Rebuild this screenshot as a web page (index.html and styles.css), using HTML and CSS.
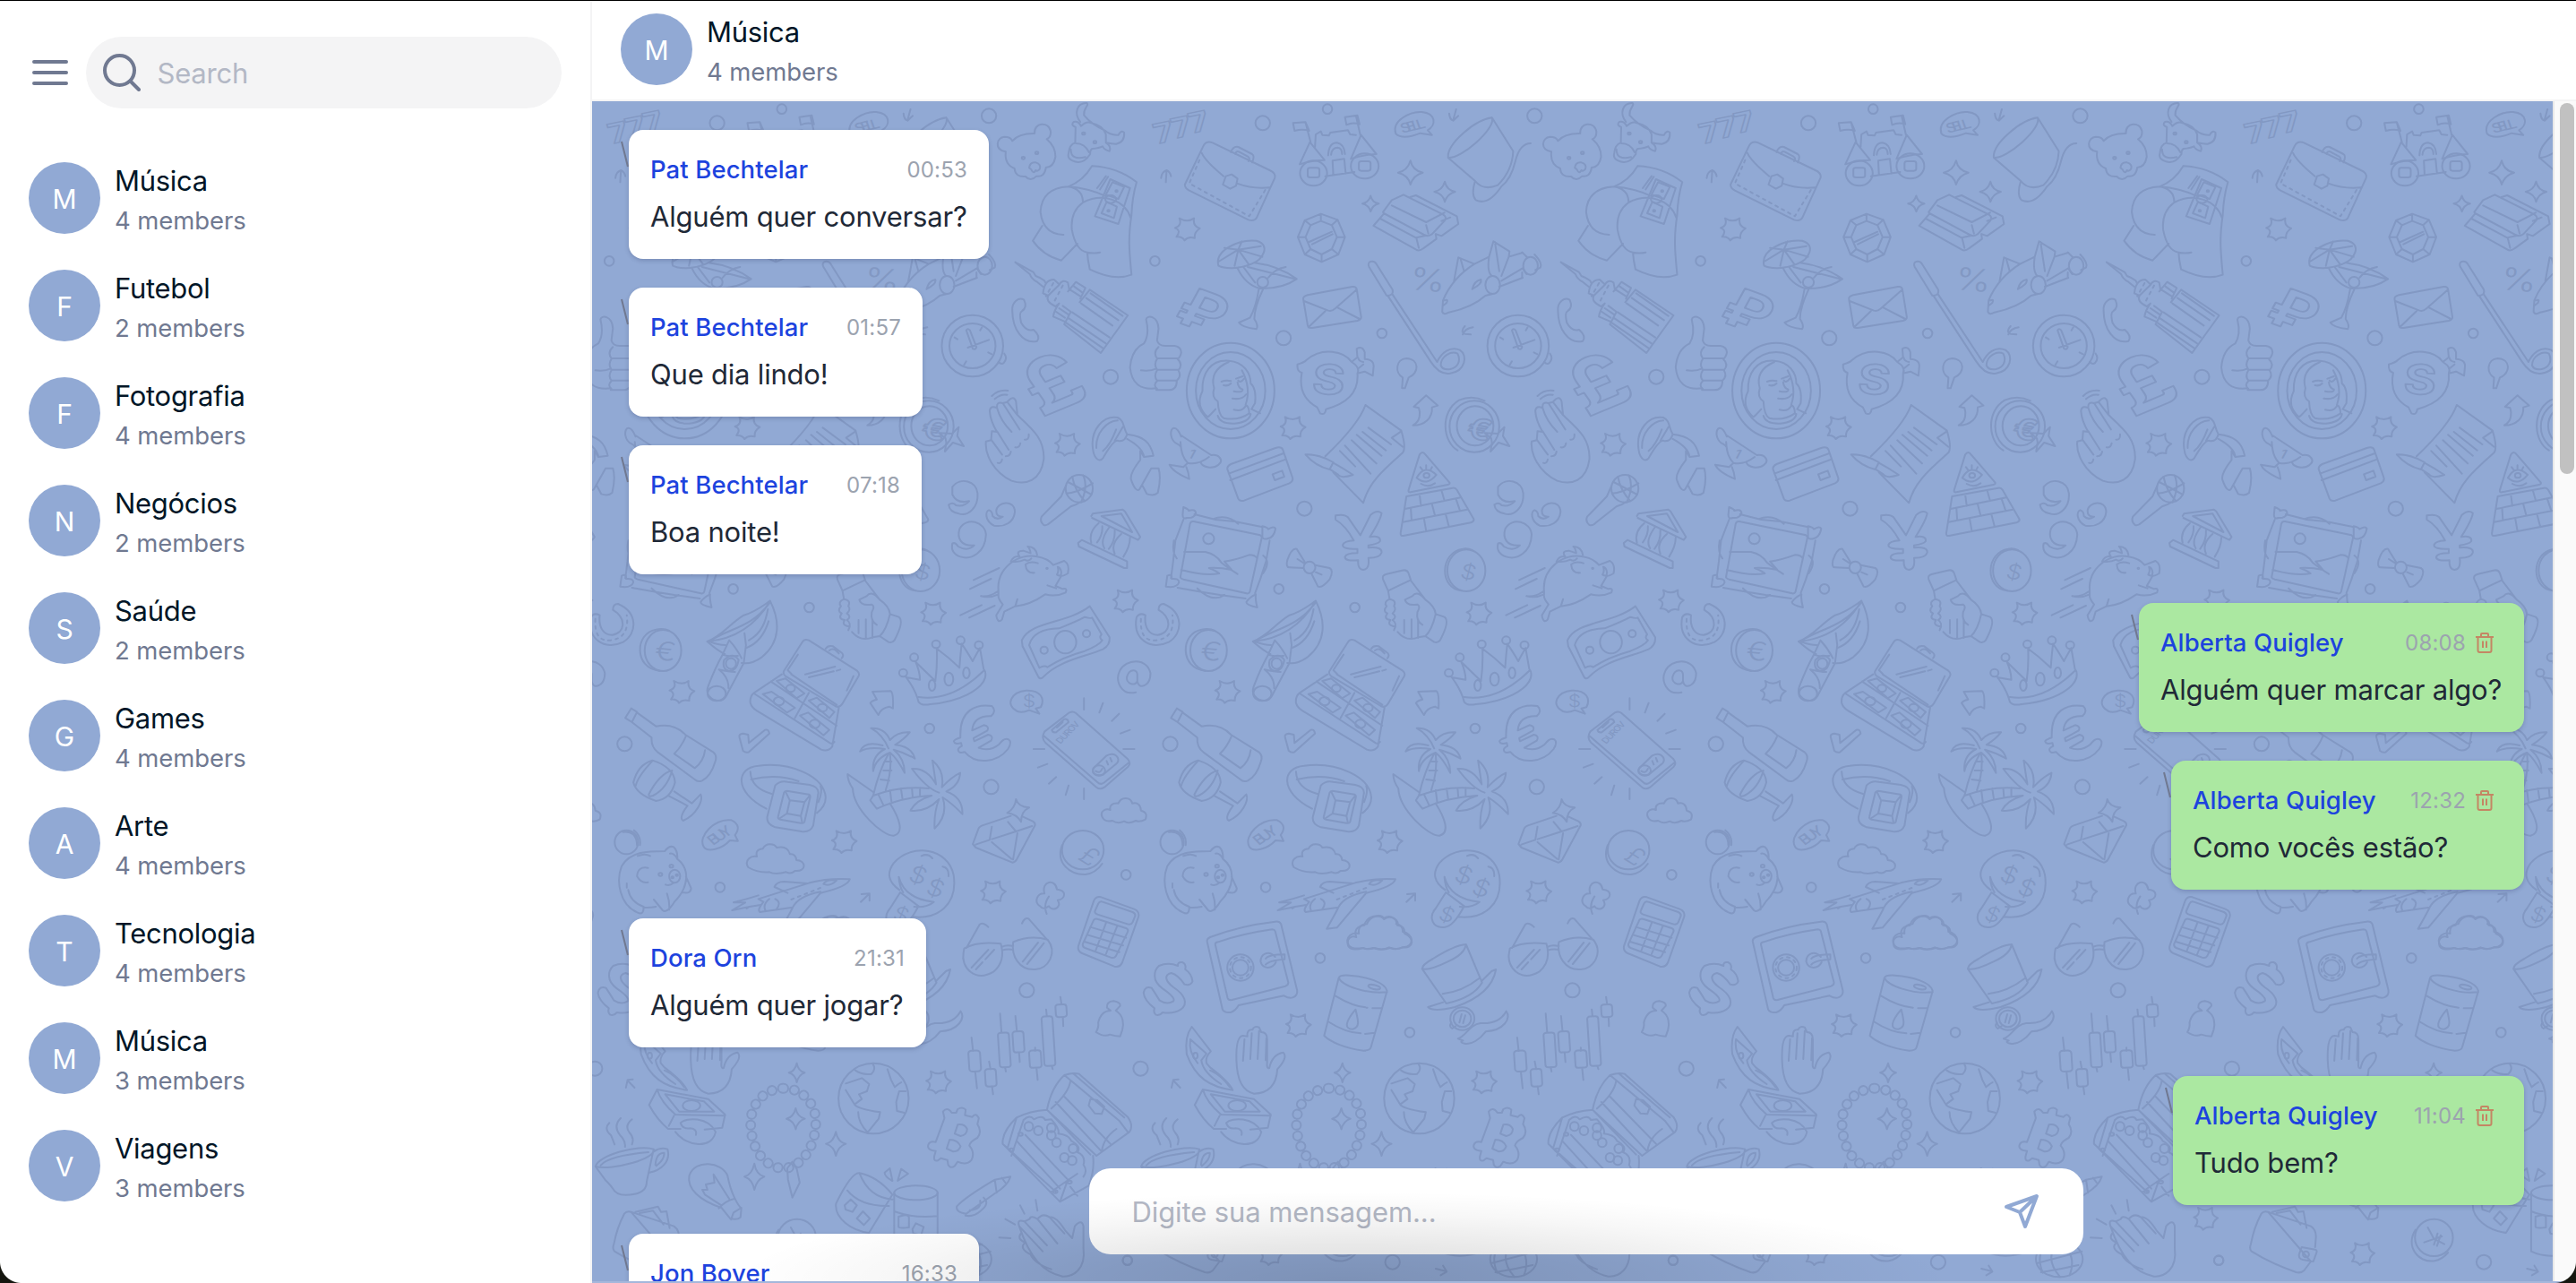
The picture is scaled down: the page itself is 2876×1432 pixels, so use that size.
FILE: index.html
```html
<!DOCTYPE html>
<html lang="pt-BR">
<head>
<meta charset="utf-8">
<title>Chat</title>
<link rel="stylesheet" href="styles.css">
</head>
<body>
<div class="app">
  <aside class="sidebar">
    <div class="topbar">
      <svg class="menu" viewBox="0 0 40 28"><path d="M2 2H38M2 14H38M2 26H38"/></svg>
      <div class="search">
        <svg viewBox="0 0 42 42"><circle cx="18.5" cy="18.5" r="16.5"/><path d="M31 31L40 40"/></svg>
        <span>Search</span>
      </div>
    </div>
    <div class="groups">
      <div class="group"><div class="avatar">M</div><div class="info"><b>Música</b><span>4 members</span></div></div>
      <div class="group"><div class="avatar">F</div><div class="info"><b>Futebol</b><span>2 members</span></div></div>
      <div class="group"><div class="avatar">F</div><div class="info"><b>Fotografia</b><span>4 members</span></div></div>
      <div class="group"><div class="avatar">N</div><div class="info"><b>Negócios</b><span>2 members</span></div></div>
      <div class="group"><div class="avatar">S</div><div class="info"><b>Saúde</b><span>2 members</span></div></div>
      <div class="group"><div class="avatar">G</div><div class="info"><b>Games</b><span>4 members</span></div></div>
      <div class="group"><div class="avatar">A</div><div class="info"><b>Arte</b><span>4 members</span></div></div>
      <div class="group"><div class="avatar">T</div><div class="info"><b>Tecnologia</b><span>4 members</span></div></div>
      <div class="group"><div class="avatar">M</div><div class="info"><b>Música</b><span>3 members</span></div></div>
      <div class="group"><div class="avatar">V</div><div class="info"><b>Viagens</b><span>3 members</span></div></div>
    </div>
  </aside>
  <main class="chat">
    <header class="header group"><div class="avatar">M</div><div class="info"><b>Música</b><span>4 members</span></div></header>
    <section class="body">
      <svg class="doodles" viewBox="661 113 2189 1317">
        <defs>
          <ellipse id="b" rx="20" ry="24"/>
          <ellipse id="s" rx="13" ry="16"/>
          <path id="st" d="M-22-36Q0-20 18-36Q14-10 34-2Q18 10 20 30Q2 24-8 38Q-14 24-30 26Q-16 4-34-4Q-14-12-22-36Z"/>
          <path id="sp" d="M0-40Q6-6 34 0Q8 8 0 40Q-6 8-34 0Q-8-6 0-40Z"/>
          <path id="necklace" d="M696 644C750 644 786 700 784 760C782 850 740 910 696 912C640 910 606 840 606 760C606 690 650 644 696 644"/>
          <g id="tile">
            <g transform="translate(1060 100) scale(.40816 .33333)">
              <use href="#b" x="108" y="88"/><use href="#b" x="857" y="112"/><use href="#s" x="1034" y="65"/><use href="#s" x="562" y="574"/><use href="#b" x="914" y="832"/><use href="#s" x="1183" y="816"/><use href="#b" x="441" y="962"/><use href="#b" x="971" y="1403"/>
              <use href="#st" x="651" y="467"/><use href="#st" x="323" y="1188"/><use href="#st" x="940" y="1132"/>
              <use href="#sp" x="1261" y="278"/><use href="#sp" transform="translate(1355 342) scale(.84)"/><use href="#sp" transform="translate(1152 382) scale(.66)"/>
              <!-- bear -->
              <path d="M154 208C120 200 130 160 150 158Q168 158 172 172Q190 146 233 147C230 110 272 104 277 140Q278 160 266 166Q290 190 290 225Q285 260 264 261Q260 294 238 290Q222 310 208 291Q180 294 178 264Q150 250 154 208Z"/>
              <path d="M218 262Q220 242 236 244Q252 250 247 266Q240 276 236 270Q230 284 224 268Z"/><circle cx="202" cy="229" r="4"/><circle cx="239" cy="212" r="4"/>
              <!-- cow -->
              <path d="M358 108C340 80 348 44 376 45C384 52 366 60 368 86Q390 118 424 136Q440 154 462 152Q470 134 478 144Q480 176 456 182Q444 182 428 178Q444 190 438 206Q424 202 419 190Q410 196 390 198Q384 204 385 216Q370 244 352 243Q320 238 326 212Q328 184 344 178L345 126Q330 118 340 108Q352 104 360 122Q376 104 388 112Q420 120 428 150L428 178M332 200Q332 238 372 226M346 180Q370 180 382 210"/><circle cx="367" cy="147" r="4"/><circle cx="398" cy="176" r="4"/>
              <!-- figure with banknotes -->
              <path d="M390 256Q460 260 512 310Q500 360 498 420C488 500 492 540 498 620Q450 642 384 602Q378 570 377 545M377 545Q395 550 412 545M325 325Q366 306 390 256M325 325Q252 330 249 410Q256 484 312 486M325 325Q366 334 365 378Q330 410 335 470Q346 540 377 545M365 378C420 344 480 370 496 430M254 456L228 506Q256 556 306 572L350 516M325 325Q380 330 430 358M404 330L428 290M412 334L434 292M398 424L440 300L494 330L462 450Z"/>
              <path d="M428 352L446 310L478 326L462 366ZM416 414L430 376L458 392L450 430Z"/><ellipse cx="441" cy="367" rx="15" ry="13"/><circle cx="457" cy="340" r="3"/><circle cx="435" cy="406" r="3"/>
              <g class="o sevens"><text transform="translate(568 182) rotate(-14)">7</text><text transform="translate(616 164) rotate(-14)">7</text><text transform="translate(664 146) rotate(-14)">7</text></g>
              <!-- briefcase -->
              <path d="M644 318L694 190Q702 170 720 178L876 270Q894 280 890 296L840 430Q834 442 818 436L656 338Q644 330 644 318ZM690 212Q700 240 750 290M786 314Q830 334 876 328M756 290L772 284L788 298L784 322L768 332L748 318ZM770 210Q776 188 790 192L828 216Q836 222 828 244M782 216Q784 204 792 208L816 224Q824 230 818 240"/><path class="d" d="M684 236L656 314L820 424L864 336"/>
              <!-- castle -->
              <path d="M988 176L974 110M944 138L940 112L974 109L984 138Q966 130 944 138M986 176L1026 236Q992 236 958 250ZM1124 152L1112 88M1086 118L1082 92L1116 86L1122 116Q1104 108 1086 118M1126 152L1168 216Q1130 218 1098 232ZM1000 192L1002 150L1016 140L1020 152L1038 154L1042 144L1090 136L1096 150L1112 152M1036 220Q1038 178 1060 178Q1080 182 1082 216M1044 218Q1046 194 1062 194Q1074 196 1074 216M1050 286L1048 238L1080 232L1084 282M1028 290L1108 276"/><ellipse cx="996" cy="280" rx="37" ry="42"/><ellipse cx="1136" cy="256" rx="38" ry="42"/><rect x="980" y="262" width="32" height="32" rx="7"/><rect x="1120" y="240" width="32" height="32" rx="7"/>
              <path d="M1221 148C1208 104 1262 72 1292 75C1332 80 1332 120 1308 136L1320 152L1288 146Q1240 170 1221 148Z"/><text class="t" transform="translate(1238 146) rotate(-16)" font-size="44" textLength="70">SELL</text>
              <path d="M1386 66L1378 102M1367 80Q1368 100 1378 104L1392 88M592 310L594 270M579 296Q580 276 594 270Q604 276 606 290M1404 820Q1410 800 1432 796M1410 792Q1396 810 1410 818L1426 820"/>
              <!-- top hat -->
              <path d="M1364 228C1360 180 1440 100 1484 94C1496 130 1400 232 1364 228L1438 306Q1460 340 1500 320Q1540 270 1542 206L1484 94M1438 306Q1426 352 1440 370Q1474 390 1510 324Q1536 300 1548 240Q1560 180 1590 180"/>
              <!-- gold bars -->
              <path d="M1186 410L1210 370L1242 352L1350 418Q1362 426 1354 440L1320 484Q1310 494 1298 486L1188 414ZM1210 388L1304 444L1354 412M1304 454L1310 482M1260 360L1276 354L1388 424L1392 450L1346 490L1332 484M1188 416L1160 456L1280 538Q1288 540 1296 532L1332 500L1330 484M1178 432L1276 496L1300 490M1278 500L1284 530M1346 440L1370 428"/>
              <!-- gem -->
              <path d="M1016 416L1062 436L1082 494L1064 552L1018 577L972 552L953 494L972 438ZM1016 440L1046 454L1060 494L1046 534L1018 552L988 534L974 494L988 454ZM1016 416V440M1062 436L1046 454M1082 494H1060M1064 552L1046 534M1018 577V552M972 552L988 534M953 494H974M972 438L988 454M984 510L1046 476M992 518L1048 484"/>
              <!-- cocktail -->
              <path d="M736 590C724 540 790 500 840 506C880 520 858 570 826 584C790 602 752 600 736 590ZM790 536L736 576M790 536L780 590M790 536L818 584M790 536L856 560M790 536L852 524M790 536L800 508M790 536L752 530M788 598Q810 654 850 666Q910 668 950 634Q900 590 834 580M816 594L944 634M804 594L836 646M846 670Q838 730 822 764L792 780Q800 796 840 802Q846 790 834 768Q834 730 858 668M872 630Q890 600 920 594"/><ellipse cx="857" cy="645" rx="15" ry="18"/>
              <text class="o" transform="translate(608 772) rotate(24)" font-size="176">₽</text>
              <!-- envelope -->
              <path d="M968 702Q966 692 980 688L1102 660Q1112 658 1114 668L1126 760Q1128 770 1116 774L992 798Q982 800 980 790ZM970 708L1036 740Q1046 744 1054 734L1114 670M982 796L1028 742M1122 768L1062 730"/>
              <!-- golf club -->
              <path d="M1148 594C1140 574 1160 570 1168 584L1212 670Q1216 690 1196 690ZM1200 692L1316 910Q1340 956 1370 950C1410 944 1420 890 1396 872C1370 858 1346 880 1334 912L1212 686M1344 924C1344 890 1374 874 1390 884C1400 910 1390 930 1370 936Q1350 940 1344 924ZM1238 1000L1240 964C1218 950 1220 902 1250 900C1286 902 1286 950 1256 964L1246 1000Z"/>
              <text class="p" transform="translate(1256 668) rotate(6)" font-size="104" textLength="72">%</text>
              <!-- rocket car -->
              <path d="M1380 642L1392 562L1436 584Q1376 630 1350 706L1348 744Q1352 756 1366 746Q1430 730 1466 690L1486 684M1398 566L1408 610M1436 584L1476 560L1488 508L1532 542L1530 560L1568 546M1476 560Q1470 612 1484 624M1492 510L1504 608M1530 560L1510 624M1510 640L1568 598M1504 660L1568 630M1354 706Q1366 700 1360 714L1350 724M1430 668Q1436 640 1454 636Q1458 650 1430 668"/><ellipse cx="1486" cy="654" rx="20" ry="30"/><ellipse cx="97" cy="590" rx="20" ry="30"/><path d="M74 545L88 562M76 600L86 618M74 612V630M108 552Q130 580 124 596L110 604"/>
              <!-- clock -->
              <ellipse cx="63" cy="858" rx="84" ry="103"/><ellipse cx="63" cy="858" rx="63" ry="75"/><path d="M150 884Q160 900 148 916Q142 922 134 912M46 806Q50 798 56 806L74 862Q72 872 64 868ZM50 864L108 838M84 806L89 796M14 830L22 836M106 880L116 886M46 910L40 922"/>
              <path d="M172 740C170 710 190 694 204 704Q214 730 198 742Q190 746 196 780Q210 812 230 804Q250 826 240 842C200 854 172 800 172 740Z"/>
              <!-- skyscraper -->
              <path d="M180 578L220 618Q224 634 240 644L256 660M180 578L230 612L236 624Q250 630 260 640L264 650M256 682Q260 636 286 636L300 652M256 682L270 690L300 654Q308 634 324 646L328 672M270 690Q262 710 290 726L300 716Q286 740 284 760L314 776M324 676L346 644L372 664L358 700M356 712L384 670L488 756L414 882L314 786L332 744L310 724M386 682L474 758M374 698L462 772M360 716L446 790M336 746L438 830M324 764L428 850M316 778L420 866M340 658L364 680M330 670L358 692M300 732L324 752M292 744L316 764"/><path class="d" d="M284 648L264 692M310 656L284 716"/>
              <text class="o" transform="translate(252 1098) rotate(-27)" font-size="246">£</text>
              <!-- thumbs up -->
              <path d="M538 770C540 754 570 756 572 800L568 840Q572 858 590 858H616Q634 862 634 880Q632 896 624 902Q640 920 626 940Q636 960 622 974Q622 1006 600 1006H566M566 1000Q500 1010 494 930Q498 870 532 850Q548 820 538 770M524 940Q550 944 566 934M572 862Q556 880 568 900H624M568 902Q558 920 568 938H626M568 940Q558 960 568 974H622M568 976Q556 990 568 1002"/>
              <!-- portrait medallion -->
              <ellipse cx="769" cy="1008" rx="120" ry="160"/><ellipse cx="769" cy="1008" rx="95" ry="129"/>
              <path d="M728 1070Q706 1100 706 1096Q672 1060 692 1010C690 950 714 904 764 908C806 912 824 950 824 984Q840 1000 836 1050L826 1070L850 1084M764 912Q710 940 724 1000Q716 1030 734 1044Q736 1090 750 1100Q790 1110 820 1084Q820 1060 810 1056Q826 1000 800 940M744 978Q756 972 770 976M750 990Q762 994 770 984M784 968L802 960M790 974Q796 984 806 968M788 980Q790 1000 802 1004Q802 1016 778 1010M774 1034Q800 1040 812 1020M734 1092Q740 1120 780 1118Q820 1114 824 1086M778 1072Q800 1080 810 1060"/>
              <!-- money bag -->
              <path d="M952 920Q970 914 976 906C1020 860 1080 876 1100 912L1116 896L1114 868Q1130 856 1136 880V902Q1164 904 1160 932L1158 958L1136 944L1116 950Q1122 1040 1030 1070Q1028 1092 1014 1084L1006 1064C970 1040 956 1000 964 948Q950 944 952 920ZM1100 912Q1124 930 1116 950M1118 898Q1120 910 1132 912M1132 920L1120 932"/>
              <text class="o" transform="translate(990 1016) rotate(4)" font-size="136">S</text>
              <!-- crossed fingers -->
              <path d="M110 1076Q112 1056 130 1066Q128 1044 146 1050L158 1046Q176 1020 182 1044L186 1090C230 1140 260 1170 258 1238C250 1310 210 1326 170 1310C120 1280 96 1220 100 1178L114 1174L116 1144L130 1146Q112 1110 110 1076M130 1066Q140 1110 170 1146M146 1050L192 1138M130 1144L162 1206M114 1172L144 1222M158 1046L186 1090M206 1172Q218 1174 217 1154M180 1198Q192 1200 194 1184M154 1228Q166 1228 168 1212M132 1250Q142 1254 144 1238M116 1026Q134 1004 160 1008M124 1036Q140 1018 158 1022"/>
              <!-- sash -->
              <path d="M392 1200C386 1140 420 1090 460 1098C480 1110 474 1130 486 1154Q480 1180 462 1176Q450 1170 420 1234C408 1252 394 1230 392 1200ZM402 1200C400 1150 430 1110 460 1108M456 1138Q440 1190 420 1210M474 1130L452 1176M486 1154C530 1160 550 1180 558 1226L532 1230Q530 1200 486 1170M532 1230L522 1210V1240Q490 1290 498 1310Q510 1350 520 1338L552 1268L572 1268Q580 1300 570 1350Q560 1362 540 1354L528 1326"/>
              <!-- trophy -->
              <path d="M634 1162C620 1120 604 1130 606 1156C610 1190 630 1184 632 1196M634 1158L716 1224C740 1220 750 1244 736 1256C720 1272 692 1264 688 1250M632 1180Q634 1230 652 1250Q680 1258 710 1230M652 1250L640 1264L602 1256Q610 1280 656 1304Q654 1280 648 1264"/><text class="t" transform="translate(650 1230) rotate(24)" font-size="42">1</text>
              <path d="M760 1270Q760 1260 770 1254L892 1200Q908 1194 912 1206L938 1298Q942 1310 930 1318L806 1376Q794 1380 790 1370ZM764 1286L914 1218M768 1308L920 1238M884 1288L910 1276L916 1296L890 1308Z"/>
              <!-- letter and brush -->
              <path d="M1138 1056L1236 1142Q1250 1200 1240 1216C1180 1280 1146 1320 1132 1384L1050 1282M1028 1228Q1120 1120 1138 1056M1236 1144L1210 1166L1240 1196M1146 1132L1208 1188M1130 1146L1194 1208M1114 1156L1182 1226M1100 1174L1168 1252M1082 1192L1152 1286M1068 1210L1110 1262M974 1222Q1010 1220 1050 1248L1040 1272Q1000 1260 974 1222ZM1050 1250Q1080 1270 1104 1290Q1070 1304 1062 1288L1044 1274"/>
              <path d="M1268 1124C1290 1110 1288 1080 1284 1066L1270 1062L1304 1024L1336 1058L1320 1064C1322 1100 1300 1124 1268 1124Z"/>
              <ellipse cx="1436" cy="1128" rx="68" ry="86"/><ellipse cx="1438" cy="1126" rx="50" ry="66"/><path d="M1390 1208C1350 1180 1340 1080 1394 1040Q1430 1022 1464 1042M1484 1182L1480 1212L1502 1182L1532 1194L1514 1160L1518 1130L1500 1152L1464 1150L1482 1168Z"/><text class="o" transform="translate(1412 1164) rotate(12)" font-size="96">€</text>
              <!-- pyramid -->
              <path d="M1286 1222Q1294 1208 1302 1222L1368 1316Q1370 1322 1360 1324L1262 1348Q1254 1350 1256 1340ZM1250 1362L1376 1334Q1384 1332 1388 1340L1434 1438Q1436 1446 1426 1450L1242 1494Q1234 1496 1234 1486ZM1246 1404L1398 1366M1240 1448L1416 1406M1286 1356L1290 1394M1346 1342L1354 1376M1262 1402L1264 1440M1320 1388L1328 1426M1386 1372L1396 1408M1298 1436L1304 1478M1358 1424L1366 1462M1278 1300Q1300 1252 1332 1290Q1306 1330 1278 1300M1290 1320Q1310 1334 1328 1318M1288 1264L1294 1274M1304 1258V1270M1320 1264L1316 1274"/><circle cx="1305" cy="1292" r="8"/>
              <!-- microphone -->
              <ellipse cx="355" cy="1336" rx="37" ry="46"/><path d="M318 1328Q310 1350 306 1362L252 1430Q246 1446 258 1458Q266 1462 276 1450L332 1396Q348 1390 356 1382M320 1352Q350 1350 392 1318M324 1314Q350 1330 388 1356M336 1296Q342 1340 370 1378M366 1292Q380 1330 360 1382"/>
              <path d="M8 1330C30 1296 74 1310 77 1352C80 1400 50 1430 26 1420Q0 1414-2 1390Q10 1380 18 1392Q40 1398 54 1378Q20 1388 8 1356ZM128 1410C130 1380 178 1370 179 1414C176 1450 150 1466 122 1460C96 1444 98 1412 108 1408Q118 1412 118 1428Q130 1444 146 1430Q128 1432 128 1410Z"/>
            </g>
            <g transform="translate(1060 560) scale(.40816 .33333)">
              <use href="#s" x="901" y="292"/><use href="#s" x="1109" y="354"/><use href="#b" x="604" y="811"/><use href="#s" x="1438" y="759"/><use href="#b" x="114" y="955"/><use href="#s" x="483" y="1249"/><use href="#s" x="865" y="1291"/>
              <use href="#st" x="482" y="332"/><use href="#st" x="761" y="636"/><use href="#st" x="1449" y="374"/><use href="#st" x="1205" y="1138"/><use href="#st" x="120" y="1307"/>
              <path d="M28 90C46 50 98 66 100 110C98 170 60 196 30 184Q2 172 8 140Q16 134 24 150Q50 168 68 146C30 150 20 120 28 90Z"/>
              <!-- bank -->
              <path d="M388 48L392 40L474 26L480 32L522 118L516 128L390 54M416 48L470 40L500 102ZM352 138L362 128L486 200L486 222L478 222L354 150ZM408 72Q380 100 388 138M418 82Q420 110 404 136M438 84Q410 130 424 156M452 96Q454 130 436 158M470 108Q440 140 452 174M494 120Q494 150 476 184"/>
              <!-- boar -->
              <path d="M134 300C128 220 190 170 240 184Q270 190 284 212L314 198Q330 210 324 240Q310 250 306 248L290 282L310 292Q324 288 318 304Q290 320 262 310Q220 346 180 350L150 368L144 394Q132 410 128 380L146 344Q132 324 134 310ZM134 310Q110 324 86 316Q110 320 132 300M168 200Q176 180 192 184Q180 164 202 164L222 172Q220 156 214 150Q236 150 240 178M168 200Q190 204 206 194Q216 202 224 190M208 210Q210 240 232 238M208 210Q220 198 242 206M296 218Q300 232 294 244Q306 254 306 236Q304 220 296 218M186 326L180 350M268 280L292 290M66 262L136 222M56 292L114 258M30 380L88 346M54 388L124 348"/><circle cx="267" cy="223" r="2"/>
              <!-- framed picture -->
              <path d="M670 42L728 60L780 66L854 84M640 60L618 130L612 200L606 256M624 288L690 302L740 312L810 324M876 130L866 200L850 260L836 306M668 66L850 112Q856 116 854 122L822 300Q820 310 810 306L640 260Q630 256 632 250L658 74Q660 64 668 66ZM642 168H700Q730 176 744 204Q760 220 788 242M752 200Q780 196 820 178Q836 178 842 190M752 200L772 228Q740 220 710 222Q730 232 738 240Q700 250 634 228M720 58Q760 40 790 74M678 290Q720 340 752 312M614 130Q608 170 622 190M858 180Q880 200 858 240"/><path d="M640 18Q656 26 654 30Q674 22 674 40Q668 56 650 54Q638 60 638 44ZM856 82Q870 86 872 92Q888 80 892 90Q888 120 870 124Q854 128 856 112ZM596 248Q610 240 608 258Q628 256 628 270Q622 290 592 284ZM838 310Q836 326 842 354Q812 346 812 336Q820 320 838 310Z"/><ellipse cx="709" cy="124" rx="15" ry="18"/>
              <!-- bow -->
              <path d="M972 202L950 158Q936 154 924 196Q920 220 930 220L968 222M1000 212L1040 222Q1052 230 1040 260Q1020 290 1008 284L990 240M952 192L970 206M1002 236L1018 244"/><ellipse cx="985" cy="220" rx="16" ry="20"/>
              <path d="M1056 46Q1080 40 1090 52L1124 112L1152 44Q1170 26 1182 38Q1180 60 1150 118Q1180 112 1178 132Q1172 142 1146 146V154Q1184 150 1182 170Q1178 188 1146 188Q1150 226 1132 228Q1116 226 1118 196Q1080 200 1082 184Q1086 172 1116 172V158Q1074 160 1076 144Q1080 132 1106 130Q1084 80 1056 60Z"/>
              <ellipse cx="1414" cy="230" rx="52" ry="70"/><path d="M1400 298C1340 290 1340 170 1404 158Q1416 154 1430 162"/><text class="p" transform="translate(1394 254) rotate(12)" font-size="68">$</text>
              <!-- handshake -->
              <path d="M1200 298L1186 260Q1182 246 1196 242L1238 230Q1252 226 1256 240L1262 262Q1230 280 1200 298ZM1200 298L1204 326M1262 264L1302 328Q1328 350 1330 376Q1320 430 1302 450L1282 454Q1250 470 1226 436M1204 326Q1186 336 1196 350Q1184 366 1198 374Q1186 392 1206 396Q1196 414 1220 418M1204 326Q1224 330 1216 350Q1224 360 1212 374Q1226 386 1212 396Q1226 406 1216 430M1302 328Q1280 294 1266 316L1246 328Q1250 350 1280 344Q1290 350 1280 370Q1276 400 1294 412M1244 396V440M1264 394V456M1282 394V456M1330 376L1354 386Q1370 400 1342 464Q1336 474 1326 470L1302 450"/>
              <!-- banknote -->
              <path d="M198 464C220 400 320 410 384 350L438 454Q440 480 420 494C370 520 300 530 254 590Q248 594 244 588L200 484ZM218 480Q230 426 300 424Q350 400 370 386Q388 392 390 388L416 444Q408 456 418 464Q410 480 370 500Q310 520 268 554Q260 546 246 556Z"/><ellipse cx="317" cy="470" rx="30" ry="38"/><ellipse cx="259" cy="497" rx="10" ry="12"/><ellipse cx="375" cy="442" rx="10" ry="12"/>
              <!-- horseshoe -->
              <path d="M512 386Q520 370 536 380C532 420 546 446 570 446C606 440 610 390 572 362Q572 342 586 342C640 370 640 440 600 470C550 500 500 460 512 386Z"/><path class="d" d="M524 392Q520 470 566 464Q618 456 610 380"/>
              <ellipse cx="709" cy="498" rx="50" ry="69"/><path d="M700 566C630 560 630 440 690 428Q710 422 726 432"/><text class="p" transform="translate(684 528) rotate(6)" font-size="86">€</text>
              <path d="M30 778C30 700 70 676 116 684Q130 700 114 718Q66 716 62 766L94 748Q110 752 104 766L66 792L68 802L106 780Q122 784 114 800L80 824Q110 838 136 812Q150 788 162 796Q172 806 160 828C130 876 70 880 42 838Q24 844 24 832Q22 826 34 818L32 808Q14 814 12 802Q14 796 30 790Z"/>
              <path d="M510 638C470 650 452 600 466 566C482 526 540 520 550 574C550 620 516 630 514 600C510 620 480 610 486 584C492 560 516 556 514 584V600"/>
              <!-- lips and cigar -->
              <path d="M830 468C870 450 890 410 930 380C960 370 980 350 1002 332C1030 400 1030 470 980 520Q950 546 924 540M830 468C900 460 960 420 1002 332M836 466C900 420 950 420 1000 340M830 468Q860 500 878 510M880 480Q860 480 836 468M936 490Q980 470 998 400M944 464C980 440 990 400 996 360M890 464L872 512Q850 560 832 620Q824 650 850 664Q872 672 882 650L930 540L936 480L932 440M890 464Q910 490 924 524M872 512Q890 520 914 516M862 562Q890 570 906 570M862 562Q890 590 888 624M876 530Q900 500 916 530Q910 570 888 566Q870 560 876 530"/><ellipse cx="856" cy="642" rx="25" ry="25"/><ellipse cx="895" cy="542" rx="14" ry="18"/>
              <!-- cash suitcase -->
              <path d="M1040 566L1090 470Q1096 458 1108 464L1240 566Q1248 574 1244 584L1200 676Q1192 692 1180 684L1044 584Q1036 576 1040 566ZM1034 578L958 640Q946 652 948 674Q952 690 966 700L1142 830Q1160 838 1172 820L1190 690M958 642L1166 808Q1174 812 1178 804M1154 492Q1160 480 1174 484L1196 504Q1206 512 1198 524M1164 498Q1172 490 1180 496L1190 508M1098 578L1180 552M1108 588L1176 568M1184 566L1194 562M1078 512L1050 564L1060 576M1230 584L1212 632M1108 640L1070 724M1004 602L1184 750M1060 578L1184 680M1020 600L1044 592L1096 642L1074 658ZM982 644L1006 636L1070 690L1048 706ZM1108 666L1130 656L1178 704L1164 724ZM1084 716L1106 706L1164 764L1148 782Z"/><circle cx="1058" cy="625" r="12"/><circle cx="1026" cy="668" r="14"/><circle cx="1145" cy="690" r="13"/><circle cx="1124" cy="744" r="14"/>
              <!-- crown -->
              <path d="M1374 588Q1400 630 1408 670Q1416 684 1440 678C1520 670 1580 630 1590 590Q1594 570 1586 560L1576 490Q1562 520 1556 534Q1540 500 1526 476Q1522 520 1520 556Q1490 520 1458 492Q1460 550 1454 600Q1420 560 1400 536Q1412 570 1412 596L1374 588M1408 654Q1500 670 1586 566"/><ellipse cx="1366" cy="573" rx="11" ry="13"/><ellipse cx="1396" cy="521" rx="11" ry="13"/><ellipse cx="1456" cy="477" rx="11" ry="13"/><ellipse cx="1523" cy="464" rx="11" ry="13"/><ellipse cx="1573" cy="480" rx="11" ry="13"/><ellipse cx="1445" cy="615" rx="9" ry="18"/><ellipse cx="1491" cy="594" rx="12" ry="22"/><ellipse cx="1539" cy="573" rx="9" ry="18"/>
              <path d="M1282 636L1332 634Q1340 640 1338 692L1328 686Q1306 690 1298 714L1276 674Q1280 666 1294 662Z"/>
              <path d="M186 702C150 680 170 636 210 632C250 630 262 660 250 688L236 692L246 710L218 698Q200 708 186 702Z"/><text class="p" transform="translate(200 686)" font-size="56">$</text>
              <!-- phone -->
              <path d="M260 770L328 706Q338 700 346 708L488 862Q498 876 488 888L424 956Q412 966 402 956L262 806Q250 790 260 770ZM258 784L404 938Q414 950 424 940L492 872M280 764L314 728Q324 726 326 738L292 772Q282 774 280 764M294 756L310 738M396 890L430 850Q450 838 460 856Q466 870 454 880L420 914Q402 920 394 908Q390 896 396 890M400 902Q412 912 418 894M430 868L434 880M440 858L444 870M368 658V696M420 674L410 706M464 710L444 734M494 764L468 776M476 828H506M230 828H260M242 890L268 878M272 944L292 922M318 982L326 950M368 960V996"/><circle cx="409" cy="900" r="17"/><text class="t" transform="translate(304 812) rotate(-51)" font-size="27" textLength="86">DUROV</text>
              <!-- bottle -->
              <path d="M622 692L638 704L624 738L606 724ZM638 706L690 752Q740 740 770 780L846 838Q858 850 852 870Q840 920 816 934Q804 940 796 930L694 838Q676 820 678 790L624 738M772 784Q760 820 740 844L796 892Q820 870 824 832"/>
              <path d="M680 866Q640 880 628 940Q636 980 690 1002Q730 996 742 940Q740 890 680 866ZM680 868Q640 920 634 952M734 900Q700 910 670 980Q670 990 682 984Q720 960 734 900M740 970L788 1010L812 980C820 1000 800 1050 764 1068C752 1060 768 1030 776 1018L726 986"/>
              <path d="M918 788Q916 778 928 776L942 780L944 808L988 764Q998 760 1000 776L944 838Q936 842 928 834Z"/>
              <!-- ring -->
              <path d="M992 1028C900 970 910 890 970 884C1060 870 1150 920 1154 990Q1154 1020 1130 1042M950 930Q1020 910 1080 936M948 904Q950 960 1006 978M1140 952Q1146 970 1134 1006M1016 950Q1030 932 1050 938L1110 948Q1134 954 1134 974L1120 1084Q1112 1108 1088 1104L1016 1090Q992 1080 994 1056ZM1048 968L1108 980Q1112 982 1112 988L1096 1072Q1094 1078 1086 1076L1030 1064Q1022 1062 1024 1054L1040 974Q1042 968 1048 968ZM1056 1000L1096 1006L1086 1052L1048 1044ZM1044 970L1056 1000M1110 984L1096 1006M1090 1076L1086 1052M1026 1062L1048 1044"/>
              <!-- palms -->
              <path d="M1326 826Q1310 780 1278 758Q1316 756 1330 798Q1350 770 1384 772Q1370 794 1344 814Q1390 820 1398 860Q1370 840 1340 830Q1370 860 1370 908Q1350 860 1330 840Q1290 860 1284 902Q1280 850 1316 828Q1270 820 1248 836Q1260 800 1310 816M1464 974Q1430 960 1390 894Q1430 890 1456 946Q1450 900 1446 866Q1480 900 1472 956Q1500 920 1522 908Q1520 950 1484 970Q1530 990 1528 1046Q1500 1010 1474 990Q1490 1050 1452 1094Q1450 1040 1464 996Q1430 1040 1386 1034Q1400 1000 1444 984M1326 844Q1300 900 1284 984M1330 846Q1336 900 1318 966M1284 984L1276 1000L1294 1028Q1360 990 1442 984M1284 984Q1360 950 1436 960M1318 870H1334M1312 900H1334M1304 930L1328 934M1298 980L1312 1016M1330 966L1334 1004M1360 960L1364 994M1390 960L1392 988M1412 958V984M1284 972L1214 912Q1214 936 1228 960C1230 1030 1310 1120 1340 1118C1370 1110 1356 1060 1330 1010"/>
              <!-- diamond -->
              <path d="M182 996Q188 1022 218 1024Q196 1036 196 1072Q184 1046 158 1042Q180 1026 182 996ZM168 1052L90 1084Q80 1088 78 1100L64 1146L72 1158L172 1208Q178 1208 184 1198L234 1084Q236 1076 228 1070L200 1054M116 1088L110 1132L72 1148M116 1130L182 1104L226 1086M160 1072L182 1104M186 1110L174 1198M116 1140L170 1196"/>
              <path d="M418 1056C410 1034 430 1026 440 1032Q436 1008 462 1010C470 986 496 988 500 1010Q522 1004 524 1034Q544 1040 536 1064Q520 1074 510 1068Q490 1080 478 1070Q460 1080 446 1068Q424 1074 418 1056Z"/>
              <ellipse cx="365" cy="1166" rx="57" ry="65"/><path d="M308 1150C290 1210 330 1250 372 1248Q400 1244 418 1212"/><text class="p" transform="translate(348 1194) rotate(38)" font-size="78">£</text>
              <path d="M248 1354C230 1340 240 1310 260 1312C250 1270 290 1260 294 1298C320 1300 320 1330 296 1334C310 1360 280 1374 272 1354Q256 1368 248 1354ZM272 1322Q256 1350 266 1380"/>
              <!-- piggy bank -->
              <ellipse cx="609" cy="1140" rx="32" ry="40"/><path d="M600 1106Q636 1100 638 1150M630 1100Q650 1120 646 1150M714 1170Q726 1150 738 1156Q750 1170 748 1196C784 1230 780 1290 740 1340Q720 1380 708 1368L684 1332M720 1312Q728 1340 726 1366M690 1356Q670 1360 656 1358Q656 1386 640 1376C590 1350 580 1270 596 1220C620 1170 670 1170 714 1170M614 1300Q620 1340 656 1356M610 1278V1292M668 1226Q640 1220 638 1254Q650 1280 668 1274M748 1196Q740 1176 728 1178M716 1282Q728 1288 738 1276M772 1256L786 1294Q786 1314 762 1308M640 1186Q660 1176 674 1186"/><ellipse cx="741" cy="1254" rx="15" ry="22"/><circle cx="735" cy="1258" r="3"/><circle cx="747" cy="1250" r="3"/><circle cx="702" cy="1248" r="5"/><circle cx="732" cy="1220" r="5"/>
              <path d="M820 1154C804 1120 850 1060 896 1066C920 1080 916 1100 906 1116L914 1136L892 1134C870 1164 830 1176 820 1154Z"/><text class="t" transform="translate(846 1152) rotate(-38)" font-size="46" textLength="72">BUY</text>
              <path d="M942 1224C930 1200 950 1184 966 1188Q960 1164 982 1162C990 1140 1014 1144 1020 1158Q1050 1150 1056 1180Q1072 1178 1074 1200C1100 1200 1104 1240 1070 1236Q1060 1248 1046 1240Q1016 1250 1000 1240Q970 1244 942 1224ZM1092 1484C1080 1456 1104 1440 1120 1446Q1116 1416 1142 1414C1150 1386 1180 1380 1188 1394C1210 1380 1226 1400 1222 1414Q1240 1416 1240 1440C1270 1446 1274 1490 1240 1492Q1220 1502 1206 1494Q1180 1504 1160 1494Q1140 1500 1130 1494Q1100 1500 1092 1484Z"/>
              <!-- plane -->
              <path d="M970 1330L1110 1276Q1160 1260 1220 1264Q1214 1290 1140 1310L1060 1426L1032 1430Q1060 1370 1064 1358L974 1374Q966 1366 984 1340ZM1050 1310L1014 1290Q1020 1272 1040 1272L1104 1278M970 1318Q940 1330 902 1342L934 1342L898 1368L946 1356L976 1350M946 1356L938 1362M1064 1358Q1080 1320 1140 1306M1148 1280Q1156 1262 1184 1268Q1166 1290 1148 1280M1000 1330Q980 1350 990 1370M1016 1330Q1034 1340 1020 1364"/><path class="d" d="M1060 1332L1142 1292"/><path d="M1250 1340L1272 1314M1252 1314L1274 1312V1336"/>
              <!-- money face -->
              <path d="M1356 1300Q1310 1260 1340 1210C1390 1140 1490 1160 1504 1250C1516 1350 1460 1400 1390 1390M1366 1308Q1356 1290 1354 1256Q1370 1330 1450 1340Q1430 1360 1396 1356M1416 1186Q1434 1176 1446 1194M1474 1222Q1492 1226 1490 1254M1358 1308L1408 1354Q1380 1420 1356 1424C1320 1430 1310 1390 1330 1362Z"/><text class="p" transform="translate(1376 1268) rotate(18)" font-size="76">$</text><text class="p" transform="translate(1424 1312) rotate(18)" font-size="76">$</text><text class="p" transform="translate(1334 1398) rotate(18)" font-size="66">$</text>
            </g>
            <g transform="translate(1200 1000) scale(.40816 .33333)">
              <use href="#s" x="671" y="208"/><use href="#b" x="1361" y="316"/><use href="#s" x="916" y="457"/><use href="#b" x="180" y="578"/><use href="#s" x="144" y="1220"/><use href="#b" x="869" y="1226"/>
              <use href="#st" x="612" y="433"/><use href="#st" x="1120" y="623"/>
              <use href="#sp" transform="translate(732 592) scale(.64 .8)"/><use href="#sp" transform="translate(729 746) scale(.74 .88)"/><use href="#sp" transform="translate(839 830) scale(.8 1)"/><use href="#sp" transform="translate(616 940) scale(.8 1.1)"/>
              <!-- calculator -->
              <path d="M52 16Q58 0 72 4L162 44Q178 52 174 70L130 222Q124 240 108 236L20 192Q6 184 10 166ZM64 26Q68 16 76 20L158 54Q168 60 164 70L158 88Q154 98 144 94L62 62Q52 58 56 48ZM52 80Q56 74 64 78L140 108Q148 112 144 122L112 202Q108 210 98 206L28 174Q20 170 22 160ZM42 104L140 140M34 130L132 166M28 154L122 188M86 88L56 186M116 100L84 198"/>
              <!-- safe -->
              <path d="M362 154Q360 144 370 138Q450 100 548 86Q560 84 564 94L608 316Q610 334 596 340Q586 344 572 334L448 366Q440 384 426 390Q408 392 404 380ZM384 162Q384 156 392 154Q460 126 540 112Q546 112 548 118L584 290Q584 298 576 302L430 348Q420 350 418 342ZM522 210Q530 196 574 196V212Q530 216 522 230"/><ellipse cx="453" cy="240" rx="36" ry="44"/><ellipse cx="453" cy="240" rx="22" ry="26"/><ellipse class="d" cx="453" cy="240" rx="29" ry="35"/><path d="M548 204C530 180 508 194 508 220C514 246 540 246 550 222"/>
              <path d="M748 168C740 140 760 132 770 138Q760 104 792 98C800 64 834 60 846 78C864 60 890 84 882 98Q904 100 902 126C930 140 928 178 896 172Q880 182 860 172Q840 184 820 174Q800 182 790 174Q756 186 748 168Z"/>
              <!-- oil drum -->
              <path d="M722 274Q726 264 750 266C800 270 850 290 854 318L810 506Q808 518 790 518C740 510 700 490 682 468ZM722 274C730 300 800 330 854 322M712 334Q760 370 800 374M814 376L838 376M692 420Q740 458 782 460M794 462L820 458M768 380C740 420 736 446 760 446C780 440 776 420 768 380Z"/><ellipse cx="819" cy="305" rx="17" ry="7" transform="rotate(16 819 305)"/>
              <!-- gentleman -->
              <path d="M950 244Q950 230 980 210Q1040 164 1070 162Q1066 196 1020 220Q970 250 950 244L1016 360Q1090 340 1114 290L1070 162M1006 328Q1060 320 1106 276M1008 356L966 372Q980 390 1040 372Q1140 330 1152 246L1140 252L1112 286M1048 478C1070 470 1080 430 1110 426Q1160 430 1180 386C1194 410 1174 450 1124 454C1108 480 1084 500 1066 494Q1050 490 1062 484ZM1030 424Q1022 436 1032 444L1042 436"/><ellipse cx="1060" cy="411" rx="33" ry="38"/><ellipse cx="1060" cy="411" rx="24" ry="28"/><path d="M1052 424L1058 396M1062 426L1068 400"/>
              <!-- sunglasses -->
              <path d="M1190 176Q1226 150 1290 160Q1304 220 1270 254C1220 290 1180 240 1188 190ZM1324 154Q1370 130 1418 146C1446 190 1420 244 1384 246C1340 250 1318 200 1324 154ZM1294 170Q1306 162 1324 168M1294 182Q1308 176 1324 180M1196 174L1232 96Q1240 86 1256 104M1418 148L1366 76Q1356 70 1348 92M1210 240L1256 180M1222 246L1240 222M1248 212L1272 180M1350 220L1392 156M1362 228L1408 158"/>
              <path d="M282 234Q280 220 294 222Q306 228 302 246Q320 260 322 286Q316 302 300 296Q282 264 264 258C244 264 246 284 270 306C300 330 312 360 290 380Q270 396 240 390Q232 402 222 398Q214 390 218 376Q190 350 188 324Q192 300 210 308Q222 330 232 350Q252 366 270 352Q276 340 240 310C210 284 216 250 230 234Q256 220 282 234Z"/>
              <path d="M88 374Q86 354 106 352Q126 356 124 368L112 384C134 400 134 430 130 448L124 470Q110 470 96 464Q80 474 58 456Q66 440 64 424Q72 384 98 384Z"/>
              <!-- tossed note, hand and cash -->
              <path d="M320 438Q300 470 306 530C330 610 370 640 432 650Q420 620 370 574L360 560Q356 540 372 520ZM316 480L360 528L346 550Q350 590 400 630M370 584Q400 600 424 640M316 480Q310 520 336 560M442 550Q440 470 460 468L472 470Q470 446 486 448Q490 434 504 440L510 456Q526 456 526 480V556Q524 580 532 576Q540 530 570 524Q584 540 554 580Q550 660 490 662Q444 650 442 550M460 552L464 480M480 546L484 460M500 546L504 452M522 550L524 476"/><ellipse cx="330" cy="535" rx="6" ry="10"/>
              <path d="M350 648L490 680L536 732L528 776L480 782M350 648L328 700Q350 750 380 780L414 780M350 648Q360 690 400 732L536 736M372 664L478 688L506 722L410 722ZM396 736L382 770M414 760C430 740 490 740 510 790C500 850 430 840 400 790M414 760Q420 782 440 778Q460 780 456 800"/><ellipse cx="444" cy="702" rx="24" ry="18"/>
              <!-- beads -->
              <use href="#necklace" class="beads"/><use href="#necklace" class="beads hole"/>
              <path d="M706 912L720 890L732 914L740 960L720 1010L708 950Z"/>
              <!-- globe -->
              <ellipse cx="942" cy="678" rx="96" ry="118"/><path d="M892 584Q910 600 936 596Q950 580 940 562M866 628L910 610L930 630L924 654L902 664L910 680L890 698L866 650M890 698Q896 712 960 724L956 746L926 792Q900 760 900 724M980 580L990 616L1000 640L1010 630L1018 624M1030 654H1012L1004 690L1006 720L1026 726"/>
              <!-- coin emblem -->
              <path d="M1136 744L1132 722Q1144 704 1156 726H1168L1172 714Q1186 704 1194 716L1192 734L1212 740Q1222 724 1230 744L1226 764Q1240 790 1226 810Q1206 822 1204 836Q1220 860 1210 884Q1196 904 1172 890L1164 904Q1152 914 1146 900L1144 884L1126 878L1118 886Q1106 890 1108 872L1112 854Q1086 850 1092 832Q1096 820 1112 824ZM1172 766Q1190 762 1198 780Q1198 800 1180 804L1164 796ZM1150 816Q1172 816 1180 838Q1176 856 1160 856L1142 846Z"/>
              <!-- candlesticks -->
              <path d="M1210 474L1214 518M1220 588L1225 644M1258 554L1262 580M1266 638L1269 664M1288 394L1292 456M1302 576L1304 588M1330 402L1334 452M1340 526L1342 556M1384 508V518M1388 580L1391 616M1414 380L1416 402M1430 572L1432 580M1453 338L1456 362M1460 408L1461 436"/><g transform="rotate(-3 1330 500)"><rect x="1200" y="512" width="32" height="70" rx="9"/><rect x="1242" y="576" width="30" height="58" rx="8"/><rect x="1284" y="456" width="30" height="116" rx="8"/><rect x="1324" y="454" width="30" height="70" rx="8"/><rect x="1366" y="520" width="32" height="58" rx="8"/><rect x="1406" y="408" width="30" height="166" rx="8"/><rect x="1446" y="370" width="30" height="42" rx="8"/></g>
            </g>
            <g transform="translate(660 980) scale(.48469 .33333)">
              <!-- treasure chest -->
              <path d="M1050 776Q1060 700 1090 660Q1110 650 1124 656L1236 800Q1250 830 1240 850L1164 930L1050 776ZM1090 660L1216 812L1236 850M1110 654L1228 802M1060 772Q1100 720 1104 680M1070 750L1176 916M1090 732L1196 890M1176 916Q1180 870 1210 840M1150 740L1166 744L1182 766L1176 790L1160 788L1146 762ZM1050 776Q1010 780 980 802Q946 850 948 890L1080 1084L1146 1030Q1160 980 1156 930M1050 776L1150 926M980 802L960 900M996 810L968 930M948 890L1070 1050M980 880L1080 1040M1000 860L1098 1010M1098 1010L1080 1084M1060 1050L1120 990M996 810Q1010 790 1020 808Q1040 792 1046 810L1060 808Q1080 840 1076 856Q1100 860 1106 880Q1130 900 1120 918Q1140 930 1134 960Q1144 980 1134 1000M1120 1064L1104 1034"/><ellipse cx="1008" cy="832" rx="10" ry="15"/><ellipse cx="1030" cy="846" rx="10" ry="15"/><ellipse cx="1060" cy="836" rx="10" ry="15"/><ellipse cx="1060" cy="862" rx="10" ry="15"/><ellipse cx="1072" cy="886" rx="10" ry="15"/><ellipse cx="1110" cy="906" rx="10" ry="15"/><ellipse cx="1090" cy="936" rx="10" ry="15"/><ellipse cx="1108" cy="946" rx="10" ry="15"/><circle cx="989" cy="858" r="5"/><circle cx="968" cy="910" r="5"/><circle cx="1069" cy="1050" r="5"/><circle cx="1102" cy="1018" r="5"/>
              <path d="M80 702L84 676L96 674M84 678L100 702"/>
              <!-- cup -->
              <path d="M10 966C14 930 110 890 144 908C150 940 50 980 10 966L32 1010Q46 1030 50 1040Q60 1070 100 1058Q128 1050 128 1016L144 908M22 962Q40 930 132 918M144 916Q160 900 176 908C184 950 160 980 134 986M148 960Q150 920 168 920Q170 940 150 964M42 820Q28 840 46 862L54 892M68 804Q50 830 66 860Q80 880 78 900M94 808Q76 830 88 852Q100 870 94 892"/>
              <!-- bulb -->
              <path d="M300 1104C250 1080 220 1040 226 996C240 940 300 950 314 996Q320 1040 330 1070Q340 1100 346 1106L344 1136Q336 1146 320 1140ZM294 1106Q310 1080 330 1074M322 1144L328 1120L346 1104M300 1096L262 1060L256 1044H268L264 1026L284 1020L282 992L318 1074"/>
              <!-- drinks -->
              <path d="M618 988Q600 984 564 1090C560 1140 600 1180 640 1188L694 1060Q660 1000 618 988ZM618 988Q640 1070 694 1076M590 1046Q620 1100 686 1098M584 1096L598 1076L612 1096L602 1118L586 1110ZM612 1140L626 1116L642 1140L628 1162ZM698 1054V1250Q740 1280 798 1250V1054M698 1116Q740 1140 798 1132M708 1134Q730 1122 732 1136V1170Q710 1174 708 1168ZM740 1176L748 1156L766 1168L760 1196L742 1190ZM676 986L688 972L694 1014Q676 1000 676 986ZM706 1014L714 974L730 990Z"/><ellipse cx="748" cy="1054" rx="50" ry="24"/>
              <!-- pen -->
              <path d="M966 1000Q960 1030 930 1056L864 1124Q840 1120 842 1100Q860 1070 930 1010ZM930 1012L934 1054M946 1004L954 1020M904 1070Q920 1090 896 1116Q880 1136 862 1130M896 1080Q900 1110 872 1112"/>
              <!-- applause -->
              <path d="M986 1166Q980 1140 998 1150L1010 1142Q1012 1128 1028 1142Q1040 1120 1056 1136Q1070 1130 1092 1180L1108 1206L1114 1166Q1130 1140 1134 1166V1240C1140 1310 1110 1336 1086 1334C1040 1320 1010 1270 986 1166M986 1166L1040 1250M998 1150L1050 1230M1028 1142L1074 1224M1056 1136L1090 1190M990 1190Q980 1210 1000 1220Q984 1240 1012 1260Q1020 1290 1060 1310M988 1096L998 1124M1024 1078L1028 1114M954 1142L976 1160M940 1204L966 1206"/>
              <ellipse cx="868" cy="1276" rx="54" ry="60"/><path d="M816 1290L920 1250M826 1320Q870 1310 912 1296M868 1216Q830 1270 870 1336M868 1216Q910 1260 892 1330M848 1220Q810 1250 830 1322M820 1250Q860 1240 900 1226"/>
            </g>
            <g transform="translate(2340 1040) scale(.34184 .33333)">
              <use href="#st" transform="translate(359 960) scale(1.15 1)"/><use href="#st" transform="translate(871 1078) scale(1.15 1)"/><circle cx="401" cy="1100" r="15"/>
              <!-- wallet -->
              <path d="M562 938L702 986Q722 1000 718 1030L716 1056M702 1104L680 1134Q670 1144 654 1140Q570 1110 508 1070Q500 1060 506 1046Q516 990 540 944Q548 934 562 938ZM576 938L650 920L660 938L678 936L688 992M590 942L634 934L668 980M672 1056L716 1064Q724 1066 720 1076L710 1104L676 1098Q660 1094 664 1078Z"/><circle cx="686" cy="1080" r="10"/>
              <circle cx="1104" cy="1024" r="62"/><path d="M1044 998C1010 1050 1050 1110 1106 1102Q1130 1098 1150 1074M1084 990L1104 1028L1138 1046M1072 1040L1130 1020M1104 1048L1116 1010M1114 1052L1126 1016"/>
              <path d="M1408 1128L1440 1136M1432 1118L1444 1138L1424 1150"/>
            </g>
          </g>
        </defs>
        <use href="#tile" x="-1827.6"/><use href="#tile" x="-1218.4"/><use href="#tile" x="-609.2"/><use href="#tile"/><use href="#tile" x="609.2"/><use href="#tile" x="1218.4"/><use href="#tile" x="1827.6"/>
      </svg>
      <div class="messages">
        <article class="bubble w1"><svg class="tail" viewBox="0 0 9 30"><path d="M1 1L8 29"/></svg><div class="meta"><b>Pat Bechtelar</b><time>00:53</time></div><p>Alguém quer conversar?</p></article>
        <article class="bubble w2"><svg class="tail" viewBox="0 0 9 30"><path d="M1 1L8 29"/></svg><div class="meta"><b>Pat Bechtelar</b><time>01:57</time></div><p>Que dia lindo!</p></article>
        <article class="bubble w3"><svg class="tail" viewBox="0 0 9 30"><path d="M1 1L8 29"/></svg><div class="meta"><b>Pat Bechtelar</b><time>07:18</time></div><p>Boa noite!</p></article>
        <article class="bubble own w4"><svg class="tail" viewBox="0 0 9 30"><path d="M1 1L8 29"/></svg><div class="meta"><b>Alberta Quigley</b><time>08:08</time><svg class="trash" viewBox="0 0 20 23"><path d="M0 5H20M6 5V2Q6 1 7 1H13Q14 1 14 2V5M2.5 5V20Q2.500 22 4.500 22H15.500Q17.500 22 17.500 20V5M8 9.500V17M12 9.500V17"/></svg></div><p>Alguém quer marcar algo?</p></article>
        <article class="bubble own w5"><svg class="tail" viewBox="0 0 9 30"><path d="M1 1L8 29"/></svg><div class="meta"><b>Alberta Quigley</b><time>12:32</time><svg class="trash" viewBox="0 0 20 23"><path d="M0 5H20M6 5V2Q6 1 7 1H13Q14 1 14 2V5M2.5 5V20Q2.500 22 4.500 22H15.500Q17.500 22 17.500 20V5M8 9.500V17M12 9.500V17"/></svg></div><p>Como vocês estão?</p></article>
        <article class="bubble w6"><svg class="tail" viewBox="0 0 9 30"><path d="M1 1L8 29"/></svg><div class="meta"><b>Dora Orn</b><time>21:31</time></div><p>Alguém quer jogar?</p></article>
        <article class="bubble own w7"><svg class="tail" viewBox="0 0 9 30"><path d="M1 1L8 29"/></svg><div class="meta"><b>Alberta Quigley</b><time>11:04</time><svg class="trash" viewBox="0 0 20 23"><path d="M0 5H20M6 5V2Q6 1 7 1H13Q14 1 14 2V5M2.5 5V20Q2.500 22 4.500 22H15.500Q17.500 22 17.500 20V5M8 9.500V17M12 9.500V17"/></svg></div><p>Tudo bem?</p></article>
        <article class="bubble w8"><svg class="tail" viewBox="0 0 9 30"><path d="M1 1L8 29"/></svg><div class="meta"><b>Jon Bover</b><time>16:33</time></div></article>
      </div>
      <div class="scrollbar"><div class="thumb"></div></div>
      <form class="composer"><span>Digite sua mensagem...</span><svg viewBox="0 0 40 40"><path d="M37 3L3 15L18 21L24 37ZM37 3L18 21"/></svg></form>
      <div class="shade"></div>
    </section>
  </main>
  <i class="corner left"></i><i class="corner right"></i>
</div>
</body>
</html>
```
FILE: styles.css
```css
* { box-sizing: border-box; }
body { margin: 0; overflow: hidden; font-family: Inter, "Liberation Sans", sans-serif; }
b { font-weight: 400; }
p { margin: 0; }
.app { position: relative; display: flex; width: 2876px; height: 1432px; background: #fff; border-top: 1px solid #000; overflow: hidden; }
.sidebar { width: 661px; border-right: 2px solid #f4f4f5; flex: none; }
.topbar { display: flex; align-items: center; gap: 20px; padding: 40px 32px 0 36px; height: 120px; }
.menu { width: 40px; height: 28px; }
.menu path, .search svg { fill: none; stroke: #707991; stroke-width: 4; stroke-linecap: round; }
.search { flex: 1; height: 80px; border-radius: 40px; background: #f4f4f5; display: flex; align-items: center; gap: 18.5px; padding-left: 19px; color: #b3b8c5; font-size: 31px; letter-spacing: -.2px; }
.search svg { width: 42px; height: 42px; }
.groups { padding: 40px 32px; display: flex; flex-direction: column; }
.group { display: flex; align-items: center; height: 120px; gap: 16px; }
.avatar { width: 80px; height: 80px; border-radius: 50%; background: #91a9d4; color: #fff; font-size: 30px; display: grid; place-items: center; padding-top: 2px; flex: none; }
.info { display: flex; flex-direction: column; padding-top: 6px; color: #011627; font-size: 31px; line-height: 44px; letter-spacing: -.3px; }
.info span { color: #707991; font-size: 27.5px; letter-spacing: -.1px; }
.chat { flex: 1; display: flex; flex-direction: column; min-width: 0; }
.header { height: 112px; padding: 0 32px 2px; border-bottom: 2px solid #f4f4f5; flex: none; }
.body { position: relative; flex: 1; display: flex; background: #91a9d4; overflow: hidden; border-bottom: 2px solid #a4b7db; }
.doodles { position: absolute; left: 0; top: 0; width: 2189px; height: 1317px; fill: none; stroke: #8298c3; stroke-width: 2; stroke-linejoin: round; stroke-linecap: round; }
.doodles * { vector-effect: non-scaling-stroke; }
.doodles .d { stroke-dasharray: 3 5; }
.doodles .beads { stroke-width: 12; stroke-dasharray: .1 12; }
.doodles .hole { stroke: #91a9d4; stroke-width: 8; }
.doodles text { font-family: Inter, sans-serif; }
.doodles .o { font-weight: 700; }
.doodles .sevens { font-size: 92px; }
.doodles .sevens text { stroke-width: 1.5; }
.doodles .t, .doodles .p { fill: #8298c3; stroke: none; font-weight: 500; }
.doodles .p { font-weight: 300; }
.messages { position: relative; flex: 1; display: flex; flex-direction: column; gap: 32px; padding: 32px 32px 0 41px; align-items: flex-start; }
.bubble { position: relative; height: 144px; flex: none; border-radius: 16px; background: #fff; padding: 23px 24px 0; box-shadow: 0 2px 5px rgba(30,40,80,.22); }
.own { align-self: flex-end; background: #abe8a1; }
.tail { position: absolute; left: -9px; top: 12px; width: 9px; height: 30px; fill: none; stroke: #707991; stroke-width: 2; }
.meta { display: flex; align-items: center; height: 42px; }
.meta b { flex: 1; font-size: 27.5px; font-weight: 500; color: #1d43de; white-space: nowrap; letter-spacing: .1px; }
.meta time { font-size: 24px; color: #9ca3af; letter-spacing: .2px; }
.trash { width: 20px; height: 23px; margin: 0 10px 0 11px; fill: none; stroke: #d34a3f; stroke-opacity: .62; stroke-width: 2; }
.bubble p { color: #1f2937; font-size: 31px; line-height: 44px; margin-top: 10px; white-space: nowrap; letter-spacing: -.2px; }
.w1 { width: 402px; } .w2 { width: 328px; } .w3 { width: 327px; } .w4 { width: 430px; }
.w5 { width: 394px; } .w6 { width: 332px; } .w7 { width: 392px; } .w8 { width: 391px; }
.scrollbar { position: relative; width: 26px; background: #fafafa; border-left: 2px solid #e8e8e8; padding: 2px 2px 0 6px; }
.thumb { height: 414px; border-radius: 8px; background: #c1c1c1; }
.composer { position: absolute; left: 555px; top: 1191px; width: 1110px; height: 96px; border-radius: 24px; background: #fff; display: flex; align-items: center; justify-content: space-between; padding: 0 49px 0 47.5px; color: #b3b8c5; font-size: 31px; letter-spacing: -.1px; }
.composer svg { width: 40px; height: 40px; fill: none; stroke: #91a9d4; stroke-width: 4; stroke-linejoin: round; }
.shade { position: absolute; left: 160px; bottom: 0; width: 1360px; height: 100px; background: radial-gradient(ellipse 50% 100% at 50% 100%, rgba(0,0,0,.14), rgba(0,0,0,.09) 40%, rgba(0,0,0,.03) 75%, transparent); }
.corner { position: absolute; bottom: 0; width: 24px; height: 24px; }
.left { left: 0; background: radial-gradient(circle at 24px 0, transparent 23.500px, #15160f 24.500px); }
.right { right: 0; background: radial-gradient(circle at 0 0, transparent 23.500px, #15160f 24.500px); }
```
